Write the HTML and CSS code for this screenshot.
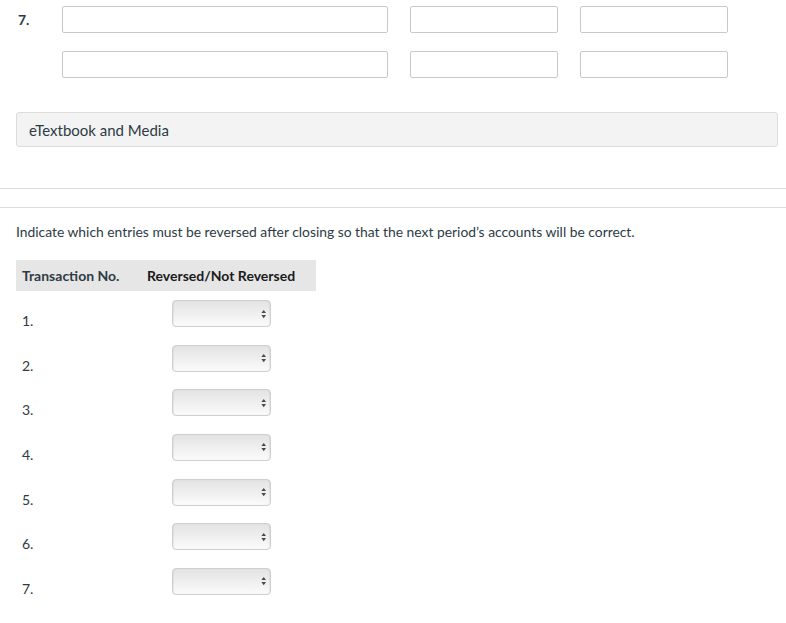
FILE: index.html
```html
<!DOCTYPE html>
<html lang="en">
<head>
    <meta charset="UTF-8">
    <meta name="viewport" content="width=device-width, initial-scale=1.0">
    <title>Reversing Entries</title>
    <link rel="stylesheet" href="styles.css">
</head>
<body>

    <!-- Journal entry rows -->
    <div class="entry-rows">
        <div class="entry-row">
            <span class="entry-no">7.</span>
            <input type="text" class="entry-input account">
            <input type="text" class="entry-input">
            <input type="text" class="entry-input">
        </div>
        <div class="entry-row">
            <span class="entry-no"></span>
            <input type="text" class="entry-input account">
            <input type="text" class="entry-input">
            <input type="text" class="entry-input">
        </div>
    </div>

    <div class="media-panel">eTextbook and Media</div>

    <hr class="divider first">
    <hr class="divider">

    <!-- Reversing entries question -->
    <p class="question">Indicate which entries must be reversed after closing so that the next period’s accounts will be correct.</p>

    <div class="reverse-table">
        <div class="table-head">
            <span class="col-no">Transaction No.</span>
            <span class="col-status">Reversed/Not Reversed</span>
        </div>
        <div class="table-row"><span class="row-no">1.</span><span class="select-wrap"><select></select><svg viewBox="0 0 6 10"><path d="M3 0.5 L5.6 4 H0.4 Z M3 9.5 L5.6 6 H0.4 Z"/></svg></span></div>
        <div class="table-row"><span class="row-no">2.</span><span class="select-wrap"><select></select><svg viewBox="0 0 6 10"><path d="M3 0.5 L5.6 4 H0.4 Z M3 9.5 L5.6 6 H0.4 Z"/></svg></span></div>
        <div class="table-row"><span class="row-no">3.</span><span class="select-wrap"><select></select><svg viewBox="0 0 6 10"><path d="M3 0.5 L5.6 4 H0.4 Z M3 9.5 L5.6 6 H0.4 Z"/></svg></span></div>
        <div class="table-row"><span class="row-no">4.</span><span class="select-wrap"><select></select><svg viewBox="0 0 6 10"><path d="M3 0.5 L5.6 4 H0.4 Z M3 9.5 L5.6 6 H0.4 Z"/></svg></span></div>
        <div class="table-row"><span class="row-no">5.</span><span class="select-wrap"><select></select><svg viewBox="0 0 6 10"><path d="M3 0.5 L5.6 4 H0.4 Z M3 9.5 L5.6 6 H0.4 Z"/></svg></span></div>
        <div class="table-row"><span class="row-no">6.</span><span class="select-wrap"><select></select><svg viewBox="0 0 6 10"><path d="M3 0.5 L5.6 4 H0.4 Z M3 9.5 L5.6 6 H0.4 Z"/></svg></span></div>
        <div class="table-row"><span class="row-no">7.</span><span class="select-wrap"><select></select><svg viewBox="0 0 6 10"><path d="M3 0.5 L5.6 4 H0.4 Z M3 9.5 L5.6 6 H0.4 Z"/></svg></span></div>
    </div>

</body>
</html>
```

FILE: styles.css
```css
/* General Styles */
body {
    font-family: Lato, "Open Sans", sans-serif;
    font-size: 14px;
    color: #2d3b45;
    margin: 0;
    padding: 0;
    background-color: #fff;
}

/* Entry rows */
.entry-rows {
    display: flex;
    flex-direction: column;
    gap: 18px;
    padding: 6px 0 0 18px;
}

.entry-row {
    display: flex;
    align-items: center;
    gap: 22px;
}

.entry-row .entry-no {
    width: 44px;
    margin-right: -22px;
    font-weight: bold;
    font-size: 14px;
    line-height: 27px;
}

.entry-input {
    box-sizing: border-box;
    width: 148px;
    height: 27px;
    margin: 0;
    border: 1px solid #c9c9c9;
    border-radius: 2px;
    background-color: #fff;
}

.entry-input.account {
    width: 326px;
}

/* eTextbook panel */
.media-panel {
    box-sizing: border-box;
    margin: 34px 8px 0 16px;
    height: 35px;
    padding: 0 12px;
    line-height: 34px;
    font-size: 15px;
    background-color: #f3f3f3;
    border: 1px solid #dcdcdc;
    border-radius: 3px;
}

.divider {
    margin: 0;
    border: none;
    border-top: 1px solid #dcdcdc;
}

.divider.first {
    margin-top: 41px;
    margin-bottom: 18px;
}

.question {
    margin: 15px 0 0 16px;
    font-size: 13.85px;
    line-height: 17px;
}

/* Reversal table */
.reverse-table {
    margin: 20px 0 0 16px;
    width: 300px;
}

.table-head {
    display: flex;
    align-items: center;
    height: 31px;
    background-color: #e6e6e6;
    font-weight: bold;
}

.table-head .col-no {
    width: 125px;
    padding-left: 6px;
    box-sizing: border-box;
}

.table-head .col-status {
    padding-left: 6px;
    color: #1a1a1a;
}

.table-row {
    display: flex;
    height: 44.67px;
}

.table-row .row-no {
    width: 156px;
    padding: 21px 0 0 6px;
    box-sizing: border-box;
    line-height: 17px;
}

.select-wrap {
    position: relative;
    margin-top: 9px;
    height: 27px;
}

.select-wrap select {
    appearance: none;
    -webkit-appearance: none;
    display: block;
    box-sizing: border-box;
    width: 99px;
    height: 27px;
    margin: 0;
    border: 1px solid #cfcfcf;
    border-radius: 4px;
    background: linear-gradient(#e3e3e3, #fbfbfb);
    box-shadow: inset 1px 0 1px rgba(0, 0, 0, 0.06), inset -1px 0 1px rgba(0, 0, 0, 0.06);
}

.select-wrap svg {
    position: absolute;
    right: 5px;
    top: 8.5px;
    width: 5.5px;
    height: 10px;
    fill: #4a4a4a;
}
```
